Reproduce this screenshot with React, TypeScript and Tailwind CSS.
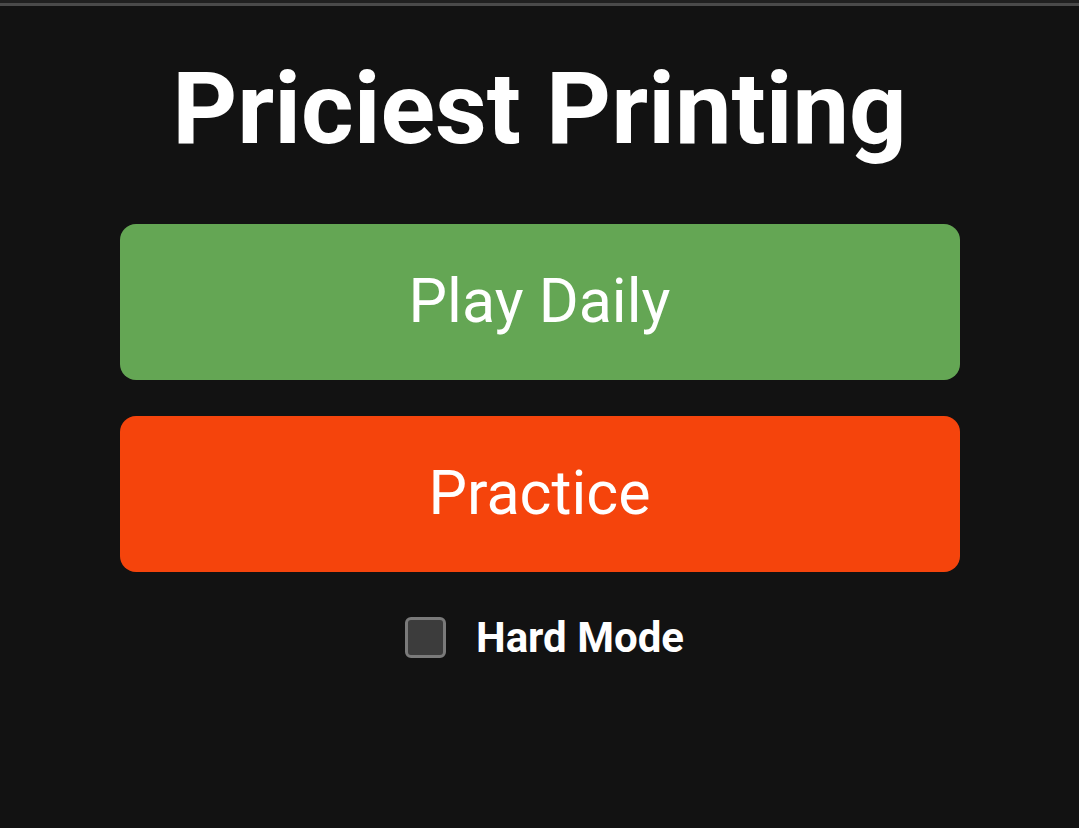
export default function App() {
  return (
    <div className="min-h-[828px] bg-[#121212] text-white font-['Roboto',sans-serif]">
      <div className="h-[3px] bg-[#202020]" />
      <div className="h-[3px] bg-[#4a4a4a]" />
      <main className="flex flex-col items-center">
        <h1 className="mt-[43px] text-[101px] leading-[120px] font-bold">
          Priciest Printing
        </h1>
        <div className="mt-[55px] w-[840px] flex flex-col gap-[36px]">
          <button className="h-[156px] rounded-[16px] bg-[#64a654] text-[61px] text-white">
            Play Daily
          </button>
          <button className="h-[156px] rounded-[16px] bg-[#f5440c] text-[61px] text-white">
            Practice
          </button>
        </div>
        <label className="mt-[34px] pl-[10px] flex items-center gap-[30px]">
          <span className="w-[41px] h-[41px] rounded-[6px] border-[3px] border-[#7a7a7a] bg-[#3c3c3c]" />
          <span className="text-[42px] font-bold">Hard Mode</span>
        </label>
      </main>
    </div>
  );
}
